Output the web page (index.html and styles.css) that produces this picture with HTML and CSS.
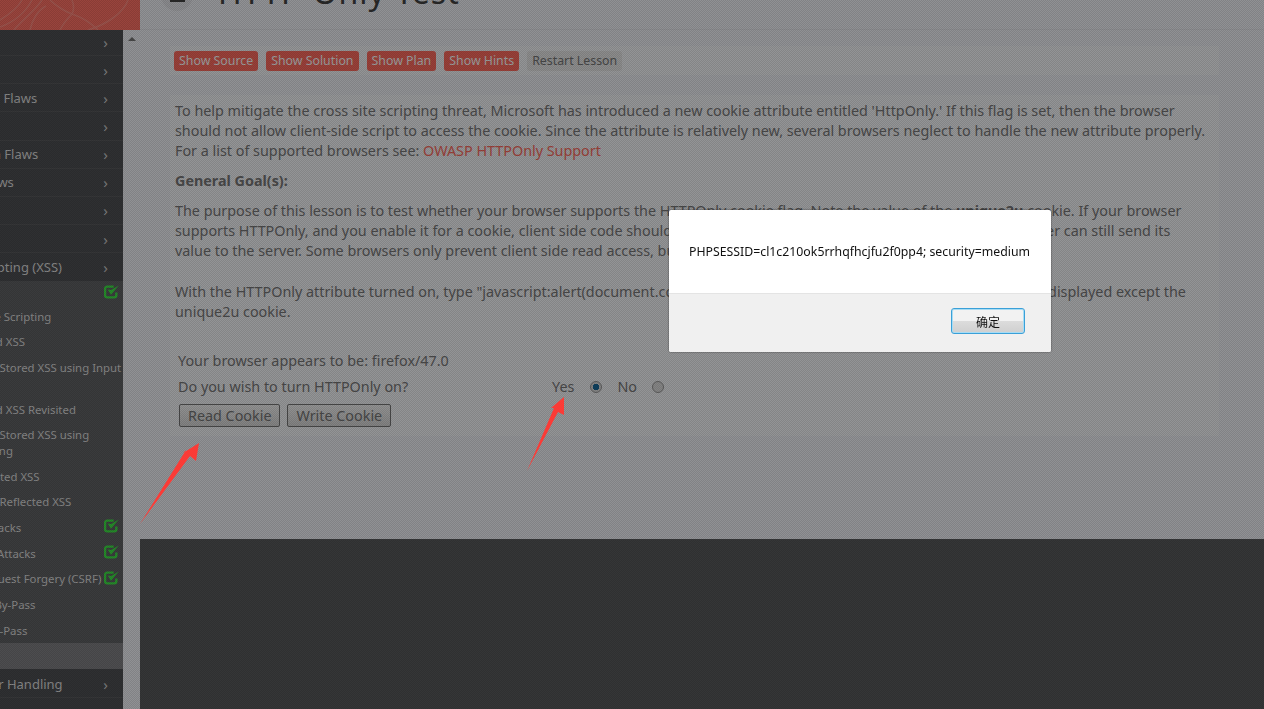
FILE: index.html
```html
<!DOCTYPE html>
<html lang="en">

<head>
  <meta charset="UTF-8">
  <title>HTTP-Only Test</title>
  <link rel="stylesheet" href="styles.css">
</head>

<body>
  <div class="page">
    <aside class="side">
      <div class="brand">
        <svg width="140" height="30" viewBox="0 0 140 30" fill="none" stroke="#ffc4b8" stroke-opacity=".3" stroke-width="1.600">
          <path d="M50 0C56 6 66 12 72 14C66 20 62 26 60 30M72 14C84 18 92 24 98 30M72 0C74 5 74 10 72 14M128 0C124 12 108 24 88 30"/>
          <path d="M0 20C10 14 18 8 22 0M0 27C14 22 26 12 32 0M14 30C22 20 34 12 42 0M30 30C32 20 38 10 46 6"/>
        </svg>
      </div>
      <div class="side-body">
        <nav class="nav">
          <div class="nav-item"><span class="nav-label">Introduction</span><span class="chev">›</span></div>
          <div class="nav-item"><span class="nav-label">General Intro</span><span class="chev">›</span></div>
          <div class="nav-item"><span class="nav-label">Access Control Flaws</span><span class="chev">›</span></div>
          <div class="nav-item"><span class="nav-label">AJAX Security</span><span class="chev">›</span></div>
          <div class="nav-item"><span class="nav-label">Authentication Flaws</span><span class="chev">›</span></div>
          <div class="nav-item"><span class="nav-label">Buffer Overflows</span><span class="chev">›</span></div>
          <div class="nav-item"><span class="nav-label">Code Quality</span><span class="chev">›</span></div>
          <div class="nav-item"><span class="nav-label">Concurrency</span><span class="chev">›</span></div>
          <div class="nav-item nav-open"><span class="nav-label">Cross-Site Scripting (XSS)</span><span class="chev">›</span></div>
          <div class="sub">
            <div class="sub-item sub-first"><span class="sub-label">Phishing</span><svg class="check" viewBox="0 0 14 14"><use href="#tick"/></svg></div>
            <div class="sub-item"><span class="sub-label">LAB: Cross Site Scripting</span></div>
            <div class="sub-item"><span class="sub-label">Stage 1: Stored XSS</span></div>
            <div class="sub-item sub-tall"><span class="sub-label">Stage 2: Block Stored XSS using Input<br>Validation</span></div>
            <div class="sub-item"><span class="sub-label">Stage 3: Stored XSS Revisited</span></div>
            <div class="sub-item sub-tall"><span class="sub-label">Stage 4: Block Stored XSS using<br>Output Encoding</span></div>
            <div class="sub-item"><span class="sub-label">Stage 5: Reflected XSS</span></div>
            <div class="sub-item"><span class="sub-label">Stage 6: Block Reflected XSS</span></div>
            <div class="sub-item"><span class="sub-label">Stored XSS Attacks</span><svg class="check" viewBox="0 0 14 14"><use href="#tick"/></svg></div>
            <div class="sub-item"><span class="sub-label">Reflected XSS Attacks</span><svg class="check" viewBox="0 0 14 14"><use href="#tick"/></svg></div>
            <div class="sub-item"><span class="sub-label">Cross Site Request Forgery (CSRF)</span><svg class="check" viewBox="0 0 14 14"><use href="#tick"/></svg></div>
            <div class="sub-item"><span class="sub-label">CSRF Prompt By-Pass</span></div>
            <div class="sub-item"><span class="sub-label">CSRF Token By-Pass</span></div>
            <div class="sub-item sub-active"><span class="sub-label">HTTPOnly Test</span></div>
          </div>
          <div class="nav-item nav-last"><span class="nav-label">Improper Error Handling</span><span class="chev">›</span></div>
        </nav>
        <div class="scroll"><span class="scroll-up"></span></div>
      </div>
    </aside>

    <main class="main">
      <header class="title-bar">
        <span class="toggle"><span class="toggle-bar"></span></span>
        <h1 class="title">HTTP-Only Test</h1>
      </header>

      <section class="content">
        <div class="toolbar">
          <a class="btn">Show Source</a>
          <a class="btn">Show Solution</a>
          <a class="btn">Show Plan</a>
          <a class="btn">Show Hints</a>
          <a class="btn btn-plain">Restart Lesson</a>
        </div>

        <article class="lesson">
          <p class="intro">To help mitigate the cross site scripting threat, Microsoft has introduced a new cookie attribute entitled 'HttpOnly.' If this flag is set, then the browser<br>should not allow client-side script to access the cookie. Since the attribute is relatively new, several browsers neglect to handle the new attribute properly.<br>For a list of supported browsers see: <a class="link">OWASP HTTPOnly Support</a></p>
          <p class="goal-head"><b>General Goal(s):</b></p>
          <p class="goal">The purpose of this lesson is to test whether your browser supports the HTTPOnly cookie flag. Note the value of the <b>unique2u</b> cookie. If your browser<br>supports HTTPOnly, and you enable it for a cookie, client side code should NOT be able to read or write that cookie, but the browser can still send its<br>value to the server. Some browsers only prevent client side read access, but do not prevent write access.<br><br>With the HTTPOnly attribute turned on, type "javascript:alert(document.cookie)" in the browser address bar. Notice all cookies are displayed except the<br>unique2u cookie.</p>

          <div class="form">
            <div class="form-row">Your browser appears to be: firefox/47.0</div>
            <div class="form-row">
              <span class="form-label">Do you wish to turn HTTPOnly on?</span>
              <span class="opt">Yes</span><span class="radio radio-on"></span>
              <span class="opt opt-no">No</span><span class="radio"></span>
            </div>
            <div class="form-btns">
              <button class="cookie-btn">Read Cookie</button>
              <button class="cookie-btn">Write Cookie</button>
            </div>
          </div>
        </article>
      </section>

      <footer class="foot"></footer>
    </main>
  </div>

  <svg class="defs" width="0" height="0">
    <symbol id="tick" viewBox="0 0 14 14">
      <path d="M11.500 8V10.500A2 2 0 0 1 9.500 12.500H3A2 2 0 0 1 1 10.500V4.500A2 2 0 0 1 3 2.500H9" fill="none" stroke="#3ee845" stroke-width="2.200"/>
      <path d="M3.500 5.200L6.500 10L13.800 1.500L6.700 5.500Z" fill="#3ee845"/>
    </symbol>
  </svg>

  <div class="dim"></div>

  <svg class="arrows" width="1264" height="709" viewBox="0 0 1264 709">
    <path d="M199 443L196 461L190 456L140 524L186 450L183 453Z" fill="#fb3b36"/>
    <path d="M564 397L564 415L558 412L527 471L554 408L551 408Z" fill="#fb3b36"/>
  </svg>

  <div class="dialog">
    <div class="dialog-body">PHPSESSID=cl1c210ok5rrhqfhcjfu2f0pp4; security=medium</div>
    <div class="dialog-foot"><button class="ok">确定</button></div>
  </div>
</body>

</html>
```

FILE: styles.css
```css
* {
  box-sizing: border-box;
}

html,
body {
  margin: 0;
  height: 709px;
  overflow: hidden;
}

body {
  font-family: "Noto Sans", "Open Sans", sans-serif;
  font-size: 14.35px;
  color: #797979;
  background: #f1f2f7;
}

.page {
  display: grid;
  grid-template-columns: 140px 1fr;
  height: 709px;
}

/* Sidebar */
.side {
  display: flex;
  flex-direction: column;
  overflow: hidden;
}

.brand {
  position: relative;
  z-index: 0;
  height: 30px;
  flex: none;
  background: #ff7266;
}

.brand svg {
  display: block;
}

.side-body {
  display: flex;
  flex: 1;
  min-height: 0;
}

.nav {
  width: 123px;
  flex: none;
  overflow: hidden;
  margin-top: -2px;
  background: #4f5054;
  color: #dcdcdc;
}

.nav-item {
  display: flex;
  align-items: center;
  justify-content: space-between;
  height: 28.15px;
  padding-right: 15px;
  border-bottom: 1px solid #5a5b5e;
  font-size: 13px;
  white-space: nowrap;
}

.nav-label {
  margin-left: -89px;
}

.nav-open {
  border-bottom: 0;
}

.nav-last {
  margin-top: 1px;
}

.chev {
  font-size: 15px;
  color: #c8c8c8;
}

.sub {
  background: #626366;
}

.sub-item {
  position: relative;
  display: flex;
  align-items: center;
  height: 25.65px;
  font-size: 11.4px;
  line-height: 16px;
  white-space: nowrap;
}

.sub-first {
  height: 22.6px;
}

.sub-label {
  margin-left: -78px;
}

.sub-tall {
  height: 41.6px;
}

.sub-active {
  background: #808184;
}

.check {
  position: absolute;
  right: 4px;
  top: 3px;
  width: 15px;
  height: 15px;
}

.scroll {
  width: 17px;
  flex: none;
  background: #f1f2f7;
  display: flex;
  justify-content: center;
  padding-top: 7px;
}

.scroll-up {
  width: 0;
  height: 0;
  border-left: 4px solid transparent;
  border-right: 4px solid transparent;
  border-bottom: 4px solid #777;
}

/* Main column */
.main {
  display: flex;
  flex-direction: column;
  min-width: 0;
}

.title-bar {
  height: 30px;
  flex: none;
  display: flex;
  align-items: flex-end;
  overflow: hidden;
  padding: 0 0 17px 21px;
  background: #f1f2f7;
  border-bottom: 1px solid #e6e7ec;
}

.toggle {
  display: block;
  width: 32px;
  height: 32px;
  flex: none;
  margin-bottom: 1px;
  border-radius: 50%;
  background: #e4e5ea;
  position: relative;
}

.toggle-bar {
  position: absolute;
  left: 9px;
  top: 20px;
  width: 15px;
  height: 3px;
  background: #444;
}

.title {
  margin: 0 0 0 25px;
  font-size: 32px;
  font-weight: 400;
  line-height: 40px;
  letter-spacing: 1px;
  color: #444;
  white-space: nowrap;
}

.content {
  height: 509px;
  flex: none;
  padding: 16px 45px 0 30px;
  background: #f1f2f7;
}

.toolbar {
  display: flex;
  align-items: center;
  gap: 8px;
  height: 29px;
  padding: 0 4px;
  background: #f6f7fa;
}

.btn {
  display: block;
  height: 20px;
  padding: 0 5px;
  line-height: 20px;
  border-radius: 3px;
  background: #ff6c60;
  color: #fff;
  font-size: 12.35px;
  white-space: nowrap;
}

.btn-plain {
  background: #e8e8e8;
  color: #777;
}

.lesson {
  margin-top: 20px;
  height: 341px;
  padding: 6px 5px 0;
  background: #f6f7fa;
  color: #797979;
  line-height: 20px;
  white-space: nowrap;
}

.lesson p {
  margin: 0;
}

.goal-head {
  padding-top: 10px;
}

.lesson .goal {
  padding-top: 10px;
  line-height: 20.2px;
}

.link {
  color: #ff6c60;
}

.form {
  padding: 26px 0 0 3px;
}

.form-row {
  display: flex;
  align-items: center;
  height: 26px;
}

.form-label {
  width: 374px;
}

.opt-no {
  margin-left: 15px;
}

.radio {
  width: 12px;
  height: 12px;
  margin-left: 15px;
  border: 1px solid #999;
  border-radius: 50%;
  background: #ddd;
}

.radio-on {
  margin-left: 16px;
  background: radial-gradient(circle, #1a6a9a 0 3px, #dcdcdc 3.5px);
}

.form-btns {
  display: flex;
  gap: 7px;
  margin: 4px 0 0 1px;
}

.cookie-btn {
  height: 23px;
  padding: 0 8px;
  border: 1px solid #777;
  border-radius: 2px;
  background: linear-gradient(#f4f4f4, #d8d8d8);
  color: #777;
  font-family: inherit;
  font-size: 14.35px;
}

.foot {
  flex: 1;
  background: #595a5c;
}

/* Modal backdrop: fine dither over the whole page */
.dim {
  position: fixed;
  inset: 0;
  background-color: rgba(0, 0, 0, 0.4);
  background-image: conic-gradient(rgba(0, 0, 0, 0.1) 25%, transparent 0 50%, rgba(0, 0, 0, 0.1) 0 75%, transparent 0);
  background-size: 2px 2px;
}

.arrows {
  position: fixed;
  left: 0;
  top: 0;
}

.defs {
  position: absolute;
}

.dialog {
  position: fixed;
  left: 669px;
  top: 210px;
  width: 382px;
  height: 142px;
  display: flex;
  flex-direction: column;
  background: #fff;
  box-shadow: 0 0 2px rgba(0, 0, 0, 0.6);
  border-radius: 2px;
  overflow: hidden;
}

.dialog-body {
  height: 84px;
  padding: 33px 0 0 20px;
  font-size: 12.3px;
  line-height: 18px;
  color: #111;
  white-space: nowrap;
  border-bottom: 1px solid #e4e4e4;
}

.dialog-foot {
  flex: 1;
  display: flex;
  justify-content: flex-end;
  align-items: flex-start;
  padding: 14px 26px 0 0;
  background: #f0f0f0;
}

.ok {
  width: 74px;
  height: 26px;
  padding: 0;
  border: 1px solid #3aa0d8;
  border-radius: 3px;
  background: linear-gradient(#f2f2f2 50%, #dcdcdc 50%, #cfcfcf);
  box-shadow: inset 0 0 0 1px #a8dcf4;
  font-family: "Noto Sans CJK SC", sans-serif;
  font-size: 12px;
  color: #111;
}
```
